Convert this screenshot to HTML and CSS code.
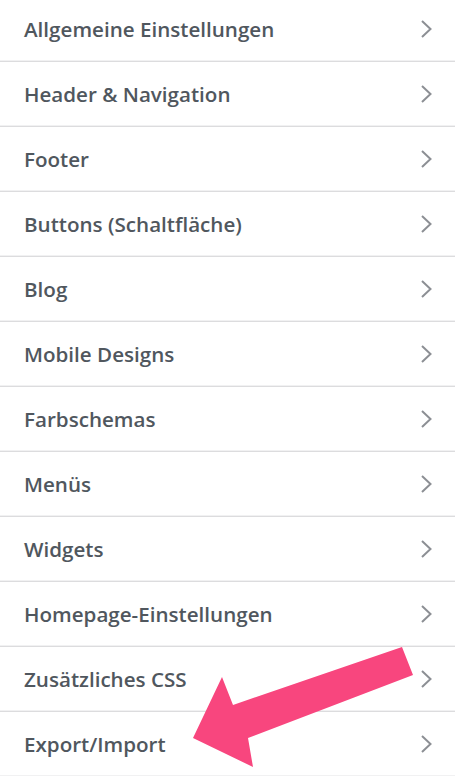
FILE: index.html
```html
<!DOCTYPE html>
<html lang="de">
<head>
<meta charset="utf-8">
<title>Customizer</title>
<link rel="stylesheet" href="styles.css">
</head>
<body>
<ul class="sections">
  <li class="section"><span class="label">Allgemeine Einstellungen</span><svg class="chev" viewBox="0 0 13 20"><polyline points="2,2 10.5,10 2,18"/></svg></li>
  <li class="section"><span class="label">Header &amp; Navigation</span><svg class="chev" viewBox="0 0 13 20"><polyline points="2,2 10.5,10 2,18"/></svg></li>
  <li class="section"><span class="label">Footer</span><svg class="chev" viewBox="0 0 13 20"><polyline points="2,2 10.5,10 2,18"/></svg></li>
  <li class="section"><span class="label">Buttons (Schaltfläche)</span><svg class="chev" viewBox="0 0 13 20"><polyline points="2,2 10.5,10 2,18"/></svg></li>
  <li class="section"><span class="label">Blog</span><svg class="chev" viewBox="0 0 13 20"><polyline points="2,2 10.5,10 2,18"/></svg></li>
  <li class="section"><span class="label">Mobile Designs</span><svg class="chev" viewBox="0 0 13 20"><polyline points="2,2 10.5,10 2,18"/></svg></li>
  <li class="section"><span class="label">Farbschemas</span><svg class="chev" viewBox="0 0 13 20"><polyline points="2,2 10.5,10 2,18"/></svg></li>
  <li class="section"><span class="label">Menüs</span><svg class="chev" viewBox="0 0 13 20"><polyline points="2,2 10.5,10 2,18"/></svg></li>
  <li class="section"><span class="label">Widgets</span><svg class="chev" viewBox="0 0 13 20"><polyline points="2,2 10.5,10 2,18"/></svg></li>
  <li class="section"><span class="label">Homepage-Einstellungen</span><svg class="chev" viewBox="0 0 13 20"><polyline points="2,2 10.5,10 2,18"/></svg></li>
  <li class="section"><span class="label">Zusätzliches CSS</span><svg class="chev" viewBox="0 0 13 20"><polyline points="2,2 10.5,10 2,18"/></svg></li>
  <li class="section"><span class="label">Export/Import</span><svg class="chev" viewBox="0 0 13 20"><polyline points="2,2 10.5,10 2,18"/></svg></li>
</ul>
<svg class="pointer" viewBox="0 0 455 776" aria-hidden="true">
  <polygon points="402,647 413,675 248,738 253,767 193,738 222,677 233,705"/>
</svg>
</body>
</html>
```

FILE: styles.css
```css
html, body {
  margin: 0;
  padding: 0;
  background: #ffffff;
}
body {
  width: 455px;
  height: 776px;
  overflow: hidden;
  position: relative;
  font-family: "Open Sans", "Noto Sans", sans-serif;
}
.sections {
  list-style: none;
  margin: -3px 0 0 0;
  padding: 0;
}
.section {
  height: 64px;
  border-bottom: 1px solid #dcdcde;
  box-shadow: inset 0 -5px 0 -4px #f1f1f2;
  display: flex;
  align-items: center;
  justify-content: space-between;
  padding: 0 22px 0 24px;
  box-sizing: content-box;
}
.label {
  font-size: 20.6px;
  font-weight: 600;
  color: #50575e;
}
.chev {
  width: 13px;
  height: 20px;
  fill: none;
  stroke: #8c8f94;
  stroke-width: 2;
}
.pointer {
  position: absolute;
  left: 0;
  top: 0;
  width: 455px;
  height: 776px;
  fill: #f8467e;
}
```
